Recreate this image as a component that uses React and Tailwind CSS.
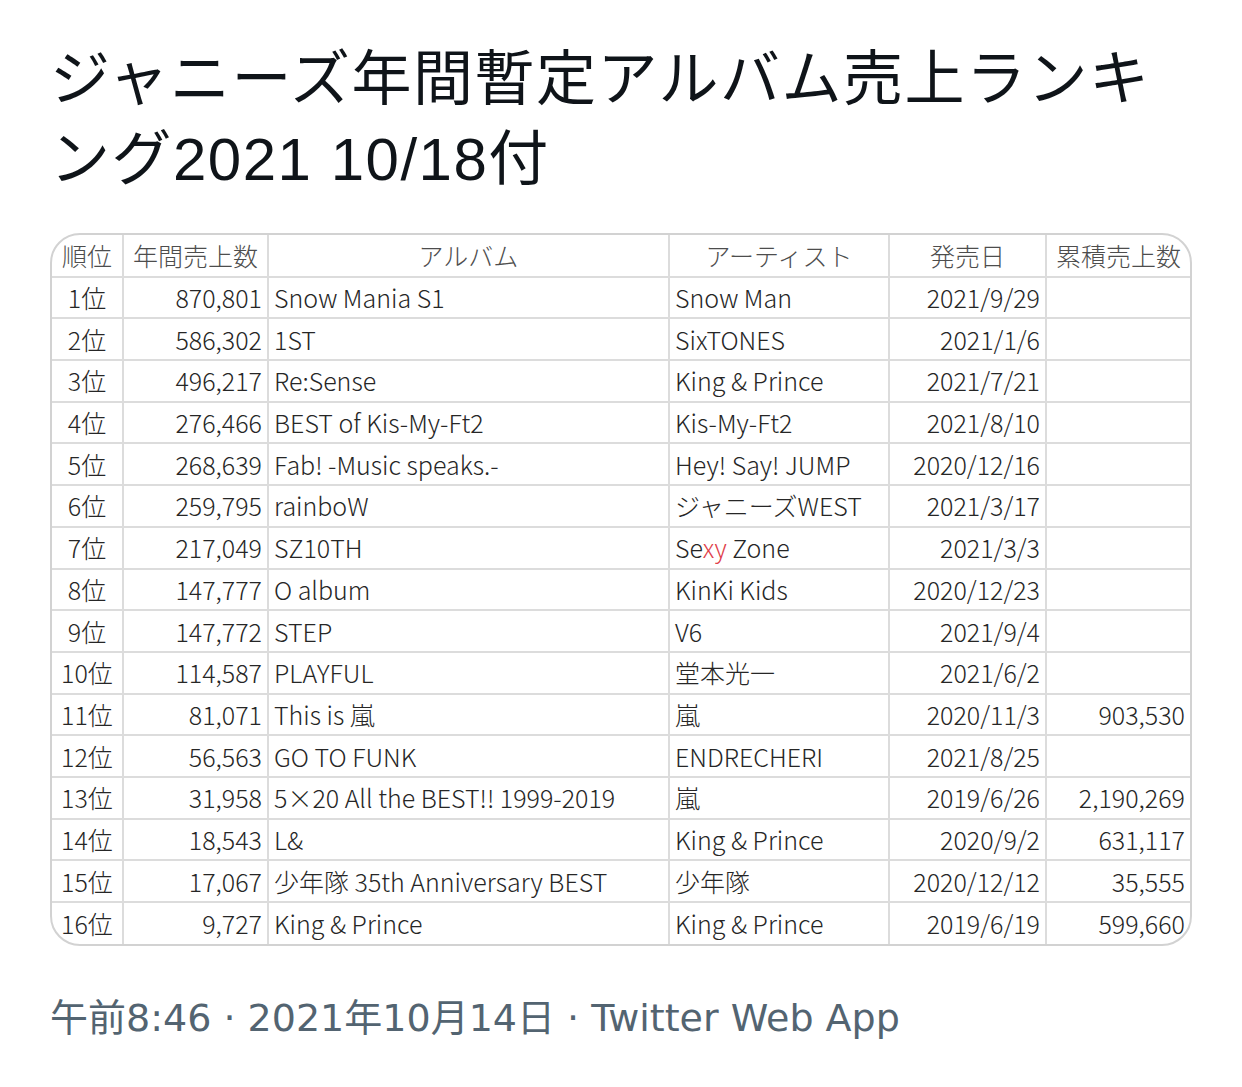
const rows = [
  ['1位', '870,801', 'Snow Mania S1', 'Snow Man', '2021/9/29', ''],
  ['2位', '586,302', '1ST', 'SixTONES', '2021/1/6', ''],
  ['3位', '496,217', 'Re:Sense', 'King & Prince', '2021/7/21', ''],
  ['4位', '276,466', 'BEST of Kis-My-Ft2', 'Kis-My-Ft2', '2021/8/10', ''],
  ['5位', '268,639', 'Fab! -Music speaks.-', 'Hey! Say! JUMP', '2020/12/16', ''],
  ['6位', '259,795', 'rainboW', 'ジャニーズWEST', '2021/3/17', ''],
  ['7位', '217,049', 'SZ10TH', 'sexy', '2021/3/3', ''],
  ['8位', '147,777', 'O album', 'KinKi Kids', '2020/12/23', ''],
  ['9位', '147,772', 'STEP', 'V6', '2021/9/4', ''],
  ['10位', '114,587', 'PLAYFUL', '堂本光一', '2021/6/2', ''],
  ['11位', '81,071', 'This is 嵐', '嵐', '2020/11/3', '903,530'],
  ['12位', '56,563', 'GO TO FUNK', 'ENDRECHERI', '2021/8/25', ''],
  ['13位', '31,958', '5×20 All the BEST!! 1999-2019', '嵐', '2019/6/26', '2,190,269'],
  ['14位', '18,543', 'L&', 'King & Prince', '2020/9/2', '631,117'],
  ['15位', '17,067', '少年隊 35th Anniversary BEST', '少年隊', '2020/12/12', '35,555'],
  ['16位', '9,727', 'King & Prince', 'King & Prince', '2019/6/19', '599,660'],
]

const headers = ['順位', '年間売上数', 'アルバム', 'アーティスト', '発売日', '累積売上数']

const cell = 'border-2 border-[#dcdcdc] h-[41.7px] px-[5px] whitespace-nowrap leading-none'

function Artist({ name }) {
  if (name === 'sexy') {
    return (
      <span>
        Se<span className="text-[#e0404a]">xy</span> Zone
      </span>
    )
  }
  return name
}

export default function App() {
  return (
    <div
      className="w-[1242px] h-[1087px] bg-white pl-[50px] pr-[50px] pt-[40px]"
      style={{ fontFamily: '"Liberation Sans", "Noto Sans CJK JP", sans-serif' }}
    >
      <h1 className="text-[60px] leading-[80px] tracking-[1.5px] text-[#0f1419] font-normal">
        ジャニーズ年間暫定アルバム売上ランキング2021 10/18付
      </h1>

      <div className="mt-[33px] w-[1142px] rounded-[30px] overflow-hidden border-2 border-[#d2d2d2]">
        <table
          className="w-full border-collapse table-fixed text-[25px] text-[#262626] font-light"
          style={{ fontFamily: '"Noto Sans CJK JP", sans-serif' }}
        >
          <colgroup>
            <col className="w-[71px]" />
            <col className="w-[145px]" />
            <col className="w-[401px]" />
            <col className="w-[220px]" />
            <col className="w-[157px]" />
            <col className="w-[144px]" />
          </colgroup>
          <thead>
            <tr>
              {headers.map((h, j) => (
                <th
                  key={h}
                  className={`${cell} text-center font-light text-[#4d4d4d] border-t-0 ${j === 0 ? 'border-l-0' : ''} ${j === 5 ? 'border-r-0' : ''}`}
                >
                  {h}
                </th>
              ))}
            </tr>
          </thead>
          <tbody>
            {rows.map((r, i) => {
              const last = i === rows.length - 1 ? 'border-b-0' : ''
              return (
                <tr key={r[0]}>
                  <td className={`${cell} text-center border-l-0 ${last}`}>{r[0]}</td>
                  <td className={`${cell} text-right ${last}`}>{r[1]}</td>
                  <td className={`${cell} text-left ${last}`}>{r[2]}</td>
                  <td className={`${cell} text-left ${last}`}>
                    <Artist name={r[3]} />
                  </td>
                  <td className={`${cell} text-right ${last}`}>{r[4]}</td>
                  <td className={`${cell} text-right border-r-0 ${last}`}>{r[5]}</td>
                </tr>
              )
            })}
          </tbody>
        </table>
      </div>

      <div
        className="mt-[47px] text-[38px] leading-[50px] text-[#536471]"
        style={{ fontFamily: '"DejaVu Sans", "Noto Sans CJK JP", sans-serif' }}
      >
        午前8:46 · 2021年10月14日 · Twitter Web App
      </div>
    </div>
  )
}
